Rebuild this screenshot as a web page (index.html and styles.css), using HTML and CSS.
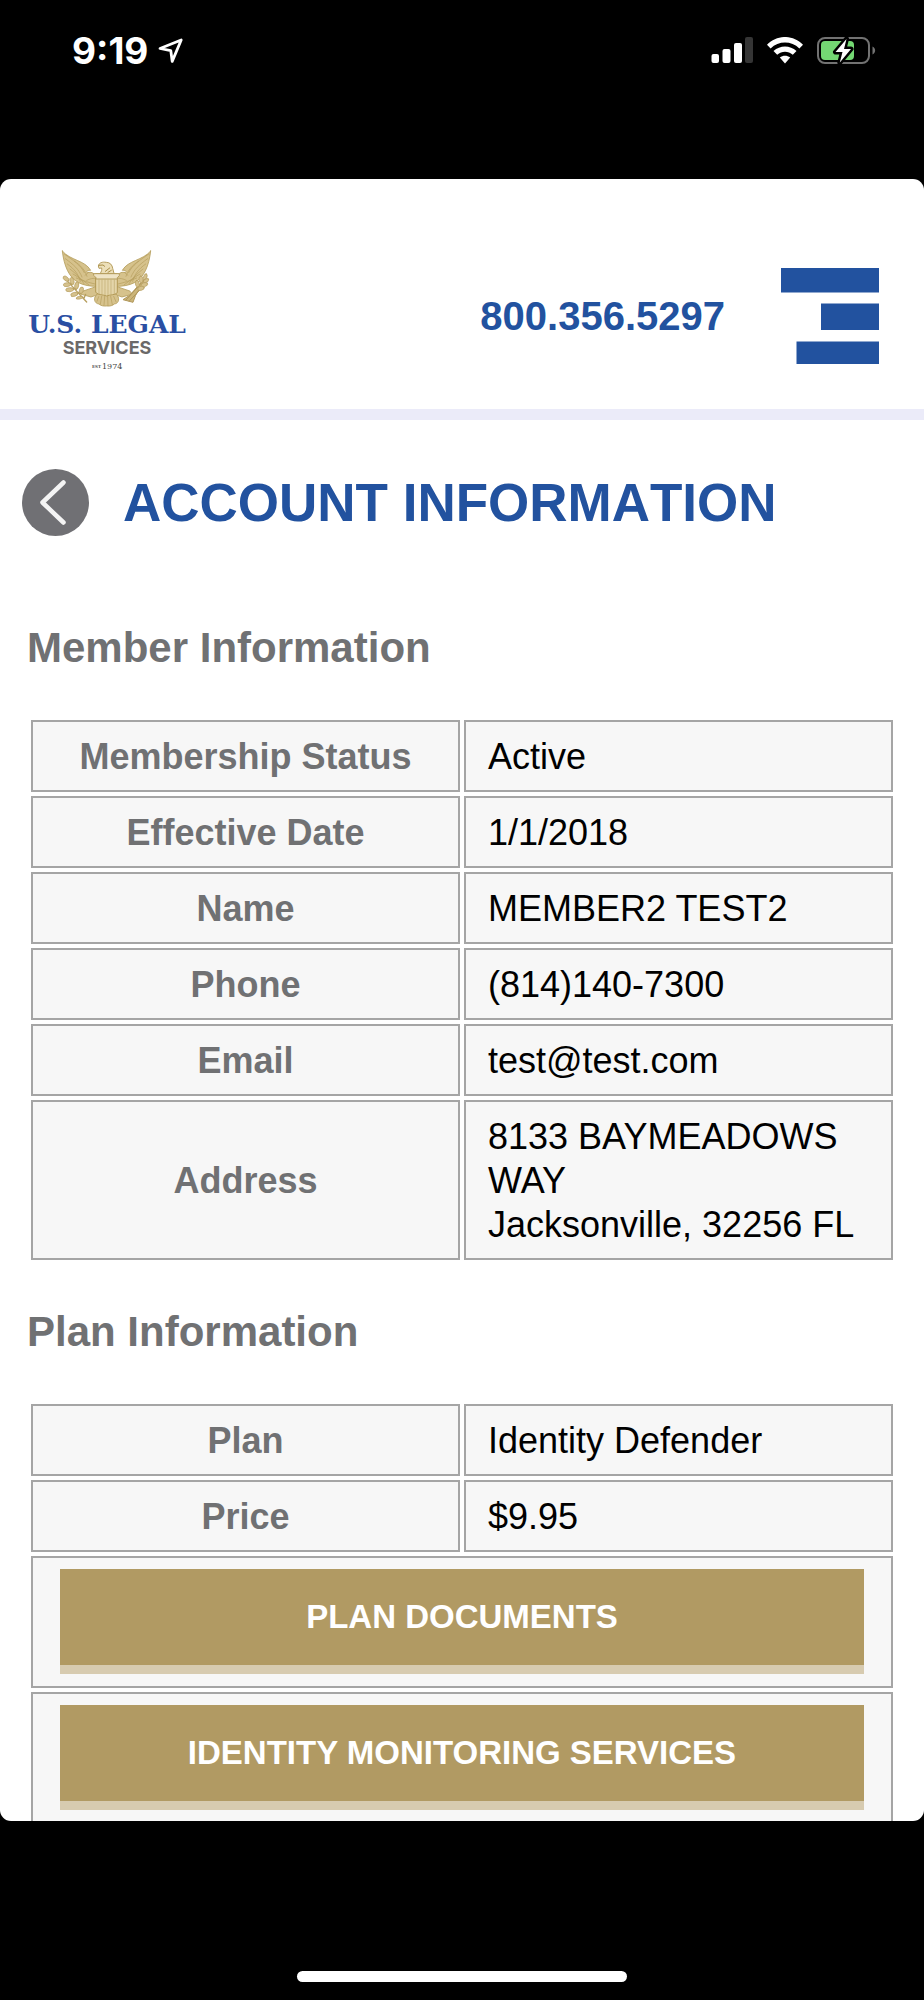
FILE: index.html
```html
<!DOCTYPE html>
<html lang="en">
<head>
<meta charset="utf-8">
<meta name="viewport" content="width=device-width, initial-scale=1">
<title>Account Information - U.S. Legal Services</title>
<link rel="stylesheet" href="styles.css">
</head>
<body>
<div class="device">
  <div class="status-bar">
    <div class="status-left">
      <span class="clock">9:19</span>
      <svg class="location" width="26" height="26" viewBox="0 0 26 26" aria-hidden="true">
        <path d="M2 10.5 23.2 2 14.2 23.4 12.8 12.6Z" fill="none" stroke="#fff" stroke-width="2.8" stroke-linejoin="round"/>
      </svg>
    </div>
    <div class="status-right">
      <svg width="42" height="27" viewBox="0 0 42 27" aria-hidden="true">
        <rect x="0.500" y="17" width="7.500" height="9" rx="2" fill="#fff"/>
        <rect x="11.500" y="12" width="8" height="14" rx="2" fill="#fff"/>
        <rect x="23" y="6" width="8" height="20" rx="2" fill="#fff"/>
        <rect x="34" y="0" width="8" height="26" rx="2" fill="#353535"/>
      </svg>
      <svg width="36" height="27" viewBox="0 0 36 27" aria-hidden="true">
        <path d="M0 7.700C10-2.600 26-2.600 36 7.700L32.400 11.400C24.300 3.500 11.700 3.500 3.600 11.400Z" fill="#fff"/>
        <path d="M6.500 14C13 7.900 23 7.900 29.500 14L25.800 17.700C21.200 13.800 14.800 13.800 10.200 17.700Z" fill="#fff"/>
        <path d="M12.800 20.600C16 18.200 20 18.200 23.200 20.600L18 26.400Z" fill="#fff"/>
      </svg>
      <svg width="59" height="28" viewBox="0 0 59 28" aria-hidden="true">
        <rect x="1" y="1" width="51" height="25" rx="7" fill="none" stroke="#727272" stroke-width="2"/>
        <rect x="4" y="4" width="33" height="19" rx="4" fill="#74d873"/>
        <path d="M55.500 9.500C59 11 59 16 55.500 17.500Z" fill="#727272"/>
        <path d="M29.500 2 18.500 15H25.500L22.800 25.500 34 12H27Z" fill="#fff" stroke="#000" stroke-width="5" stroke-linejoin="round"/>
        <path d="M29.500 2 18.500 15H25.500L22.800 25.500 34 12H27Z" fill="#fff"/>
      </svg>
    </div>
  </div>

  <div class="screen">
    <header class="site-header">
      <a class="logo" href="#" aria-label="U.S. Legal Services">
        <svg width="160" height="132" viewBox="0 0 160 132">
          <g transform="translate(23 -5) scale(.3333)" stroke-linejoin="round" stroke-linecap="round">
            <g fill="#d6c28c" stroke="#b59d5c" stroke-width="2.500">
              <path d="M37 18C42 62 56 97 86 113 101 121 121 124 139 124L139 93C134 87 126 80 116 82 106 84 110 74 122 76 104 45 61 47 37 18Z"/>
              <path d="M302 18C297 62 283 97 253 113 238 121 218 124 200 124L200 93C205 87 213 80 223 82 233 84 229 74 217 76 235 45 278 47 302 18Z"/>
              <path d="M100 138 138 125 146 148 123 156 94 148Z"/>
              <path d="M239 138 201 125 193 148 216 156 245 148Z"/>
              <path d="M141 148C128 158 133 176 147 177 152 182 160 184 170 183 180 184 188 182 193 177 207 176 211 158 199 148Z"/>
            </g>
            <g fill="none" stroke="#b59d5c" stroke-width="2">
              <path d="M43 27C72 48 91 59 103 83M46 41C72 60 86 72 96 96M52 57C73 72 86 88 91 109M60 72C78 86 91 99 102 116M69 87C90 99 105 111 117 120M79 99C101 108 118 113 135 117M73 48C93 62 105 75 111 94M105 91 116 82M110 106C120 101 130 99 138 100"/>
              <path d="M296 27C267 48 248 59 236 83M293 41C267 60 253 72 243 96M287 57C266 72 253 88 248 109M279 72C261 86 248 99 237 116M270 87C249 99 234 111 222 120M260 99C238 108 221 113 204 117M266 48C246 62 234 75 228 94M234 91 223 82M229 106C219 101 209 99 201 100"/>
              <path d="M146 155 141 169M155 154 151 178M164 154 162 181M173 154 174 182M182 154 187 179M191 154 198 170"/>
            </g>
            <path d="M151 85C155 79 156 74 155 69L147 70 145 63C147 53 157 50 169 52 180 52 187 60 188 70L192 85Z" fill="#ecdfb9" stroke="#b59d5c" stroke-width="3"/>
            <path d="M147 61 159 60 164 64M166 79 179 69M174 82 184 76" fill="none" stroke="#a98e46" stroke-width="3"/>
            <path d="M138 86H202V143C194 151 182 148 170 153 158 148 146 151 138 143Z" fill="#e4d5a9" stroke="#b39a55" stroke-width="3"/>
            <path d="M132 86H208V92L202 98V102H138V98L132 92Z" fill="#efe4c6" stroke="#b59d5c" stroke-width="3"/>
            <path d="M147 103V146M156 103V147M165 103V149M174 103V149M183 103V147M193 103V146" stroke="#c6b27b" stroke-width="2.500"/>
            <path d="M46 101C65 123 83 142 110 171M61 116 44 121M64 119 66 100M74 130 50 137M78 134 84 113M86 142 65 153M90 146 98 128M96 155 80 161M102 160 107 148" fill="none" stroke="#b79f5f" stroke-width="4"/>
            <g fill="#d5c18c" stroke="#b69e5f" stroke-width="2">
              <ellipse cx="48" cy="101" rx="10" ry="6" transform="rotate(40 48 101)"/>
              <ellipse cx="51" cy="119" rx="11" ry="6" transform="rotate(-5 51 119)"/>
              <ellipse cx="66" cy="108" rx="11" ry="6" transform="rotate(75 66 108)"/>
              <ellipse cx="59" cy="134" rx="12" ry="6" transform="rotate(-5 59 134)"/>
              <ellipse cx="80" cy="122" rx="11" ry="6" transform="rotate(100 80 122)"/>
              <ellipse cx="73" cy="148" rx="11" ry="6" transform="rotate(-15 73 148)"/>
              <ellipse cx="94" cy="136" rx="10" ry="6" transform="rotate(105 94 136)"/>
              <ellipse cx="89" cy="158" rx="10" ry="4" transform="rotate(-10 89 158)"/>
            </g>
            <path d="M290 94 239 151 219 164 249 172 256 153ZM228 165 286 101M238 168 293 110" fill="#cbb579" stroke="#b0975a" stroke-width="3"/>
            <g fill="#d5c18c" stroke="#b69e5f" stroke-width="2">
              <ellipse cx="286" cy="95" rx="9" ry="5" transform="rotate(-70 286 95)"/>
              <ellipse cx="273" cy="103" rx="10" ry="6" transform="rotate(-95 273 103)"/>
              <ellipse cx="288" cy="107" rx="9" ry="5" transform="rotate(-35 288 107)"/>
              <ellipse cx="262" cy="116" rx="10" ry="6" transform="rotate(-100 262 116)"/>
              <ellipse cx="283" cy="119" rx="10" ry="6" transform="rotate(-15 283 119)"/>
              <ellipse cx="273" cy="130" rx="10" ry="6" transform="rotate(-15 273 130)"/>
            </g>
          </g>
          <text class="logo-name" x="80" y="83" text-anchor="middle">U.S. LEGAL</text>
          <text class="logo-sub" x="80" y="104" text-anchor="middle">SERVICES</text>
          <text class="logo-est" x="65" y="118">EST</text>
          <text class="logo-year" x="75" y="119">1974</text>
        </svg>
      </a>
      <a class="phone" href="tel:8003565297">800.356.5297</a>
      <button class="menu" type="button" aria-label="Menu">
        <svg width="98" height="96" viewBox="0 0 98 96" aria-hidden="true" fill="#22529f">
          <rect width="98" height="24.500"/>
          <rect x="40" y="35.500" width="58" height="26.500"/>
          <rect x="15.500" y="73.500" width="82.500" height="22.500"/>
        </svg>
      </button>
    </header>

    <main>
      <div class="title-row">
        <button class="back" type="button" aria-label="Back">
          <svg width="67" height="67" viewBox="0 0 67 67" aria-hidden="true">
            <circle cx="33.500" cy="33.500" r="33.500" fill="#707074"/>
            <path d="M41.500 13.500 20.500 33.500 41.500 53.500" fill="none" stroke="#f4f4f4" stroke-width="4.500" stroke-linecap="round" stroke-linejoin="round"/>
          </svg>
        </button>
        <h1>ACCOUNT INFORMATION</h1>
      </div>

      <section class="section">
        <h2>Member Information</h2>
        <table class="info">
          <tr><th scope="row">Membership Status</th><td>Active</td></tr>
          <tr><th scope="row">Effective Date</th><td>1/1/2018</td></tr>
          <tr><th scope="row">Name</th><td>MEMBER2 TEST2</td></tr>
          <tr><th scope="row">Phone</th><td>(814)140-7300</td></tr>
          <tr><th scope="row">Email</th><td>test@test.com</td></tr>
          <tr><th scope="row">Address</th><td>8133 BAYMEADOWS WAY<br>Jacksonville, 32256 FL</td></tr>
        </table>
      </section>

      <section class="section">
        <h2>Plan Information</h2>
        <table class="info">
          <tr><th scope="row">Plan</th><td>Identity Defender</td></tr>
          <tr><th scope="row">Price</th><td>$9.95</td></tr>
          <tr><td class="action" colspan="2"><button class="gold" type="button">PLAN DOCUMENTS</button></td></tr>
          <tr><td class="action" colspan="2"><button class="gold" type="button">IDENTITY MONITORING SERVICES</button></td></tr>
        </table>
      </section>
    </main>
  </div>

  <div class="home-area"><div class="home-indicator"></div></div>
</div>
</body>
</html>
```
FILE: styles.css
```css
* {
  box-sizing: border-box;
}

body {
  margin: 0;
  background: #000;
  font-family: "Liberation Sans", Arial, sans-serif;
}

svg {
  display: block;
}

button {
  margin: 0;
  padding: 0;
  border: 0;
  background: none;
  font-family: inherit;
}

.device {
  display: flex;
  flex-direction: column;
  height: 100vh;
}

/* Status bar */
.status-bar {
  flex: 0 0 179px;
  display: flex;
  justify-content: space-between;
  align-items: flex-start;
  padding: 37px 48px 0 72px;
  color: #fff;
}

.status-left {
  display: flex;
  align-items: center;
  gap: 10px;
}

.clock {
  font: 700 37px/28px Inter, sans-serif;
}

.status-right {
  display: flex;
  gap: 14px;
}

/* Browser view */
.screen {
  flex: 1 1 0;
  min-height: 0;
  overflow: hidden;
  border-radius: 11px;
  background: #fff;
}

.site-header {
  display: flex;
  align-items: center;
  padding: 71px 45px 27px 27px;
  border-bottom: 11px solid #ebebf9;
}

.logo-name {
  font: 700 25px "DejaVu Serif", serif;
  fill: #2a4fa3;
}

.logo-sub {
  font: 700 18px Inter, sans-serif;
  fill: #6b6969;
}

.logo-est {
  font: 700 4px "DejaVu Serif", serif;
  fill: #555;
}

.logo-year {
  font: 400 8px "DejaVu Serif", serif;
  fill: #444;
}

.phone {
  margin-left: auto;
  margin-right: 56px;
  color: #22529f;
  font-size: 40px;
  font-weight: 700;
  line-height: 48px;
  text-decoration: none;
}

.title-row {
  display: flex;
  align-items: center;
  gap: 34px;
  padding: 49px 22px 44px;
}

h1 {
  margin: 0;
  color: #22529f;
  font-size: 53px;
  font-kerning: none;
  line-height: 64px;
}

.section {
  padding: 43px 27px 0;
}

h2 {
  margin: 0 0 43px;
  color: #707173;
  font-size: 42px;
  line-height: 50px;
}

.info {
  width: 100%;
  table-layout: fixed;
  border-collapse: separate;
  border-spacing: 4px;
}

.info th,
.info td {
  padding: 13px 22px 11px;
  border: 2px solid #a5a5a5;
  background: #f7f7f7;
  font-size: 36px;
  line-height: 44px;
}

.info th {
  color: #707173;
  text-align: center;
}

.info td {
  color: #000;
}

.info .action {
  padding: 11px 27px 12px;
}

.gold {
  display: block;
  width: 100%;
  padding: 26px 12px;
  border-bottom: 9px solid #d7cbb0;
  background: #b19a63;
  color: #fff;
  font-size: 33px;
  font-weight: 700;
  line-height: 44px;
}

/* Home indicator */
.home-area {
  flex: 0 0 179px;
  display: flex;
  justify-content: center;
  align-items: flex-end;
  padding-bottom: 18px;
}

.home-indicator {
  width: 330px;
  height: 11px;
  border-radius: 6px;
  background: #fff;
}
```
